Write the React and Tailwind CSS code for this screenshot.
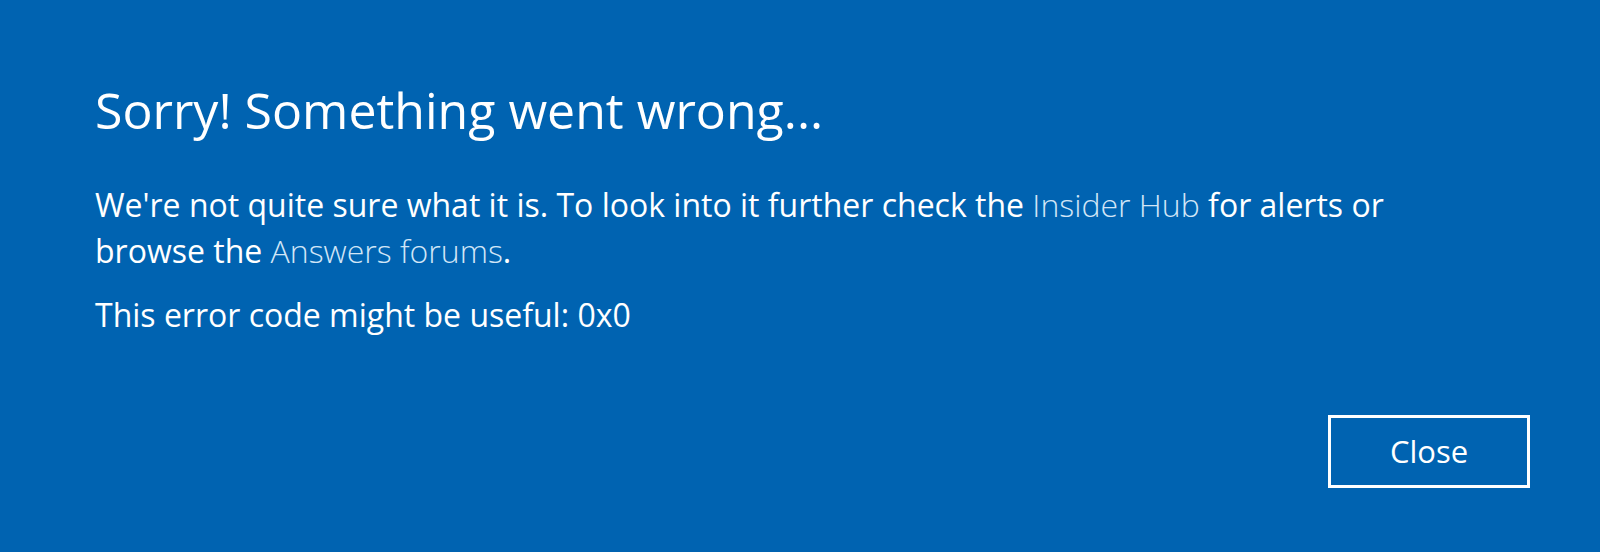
export default function App() {
  return (
    <div
      className="w-[1600px] h-[552px] bg-[#0063b1] text-white flex flex-col pl-[95px] pr-[70px] pt-[80px] pb-[64px]"
      style={{ fontFamily: '"Open Sans", "Noto Sans", sans-serif' }}
    >
      <h1 className="text-[50px] leading-[60px] font-normal">Sorry! Something went wrong...</h1>
      <p className="mt-[42px] text-[32px] leading-[46px]">
        We're not quite sure what it is. To look into it further check the{' '}
        <span className="text-[#d2e6f7] font-light">Insider Hub</span> for alerts or
        <br />
        browse the <span className="text-[#d2e6f7] font-light">Answers forums</span>.
      </p>
      <p className="mt-[18px] text-[32px] leading-[46px]">This error code might be useful: 0x0</p>
      <div className="mt-auto flex justify-end">
        <button className="w-[202px] h-[73px] border-[3px] border-white text-[31px] text-white">Close</button>
      </div>
    </div>
  );
}
